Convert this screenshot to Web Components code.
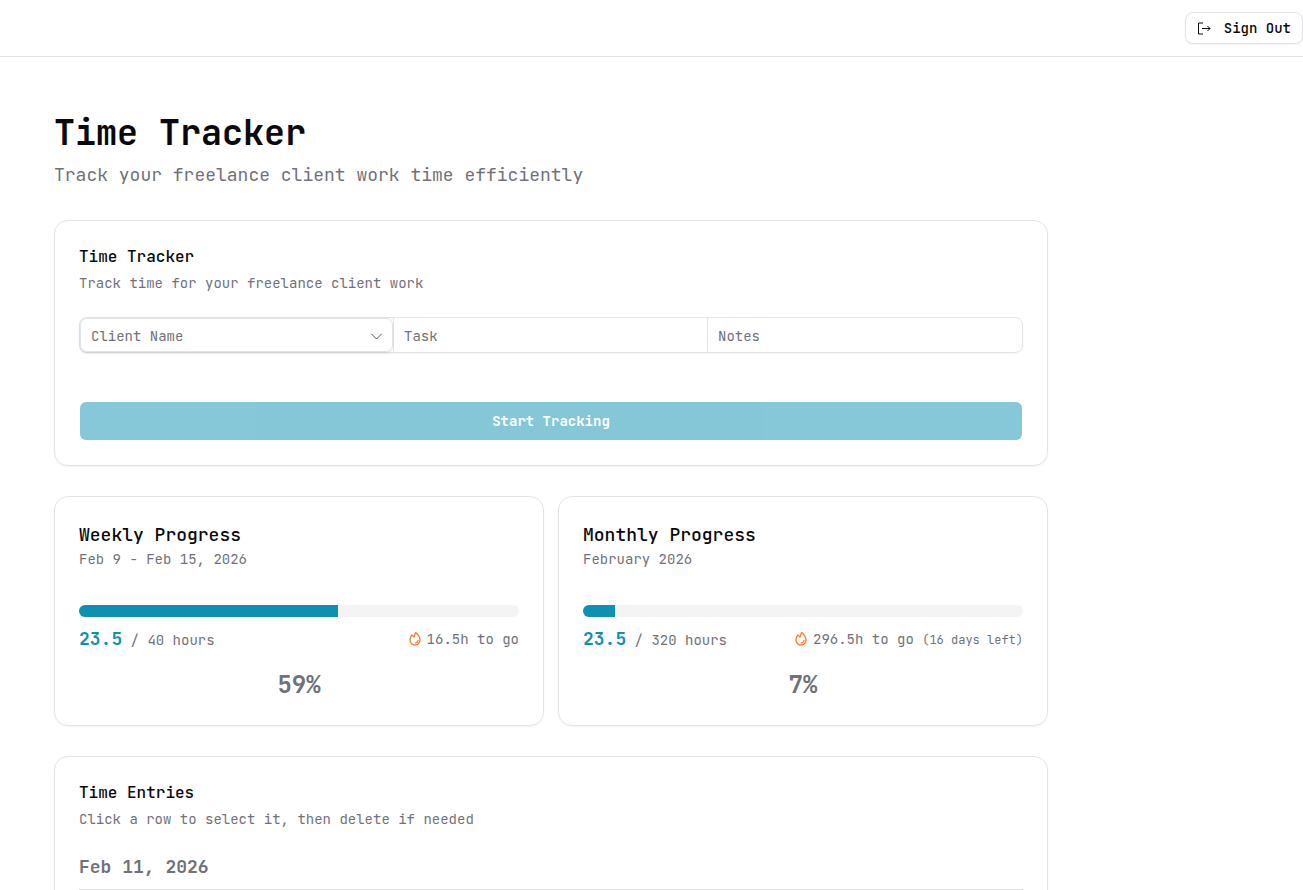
<!DOCTYPE html>
<html lang="en">
<head>
<meta charset="utf-8">
<meta name="viewport" content="width=device-width, initial-scale=1">
<title>Time Tracker</title>
<style>
  :root {
    --foreground: #09090b;
    --muted: #71717a;
    --border: #e4e4e7;
    --track: #f4f4f5;
    --primary: #0e91b1;
    --flame: #f97316;
  }

  body {
    margin: 0;
    background: #fff;
    color: var(--foreground);
    font-family: "JetBrains Mono", "DejaVu Sans Mono", monospace;
    font-size: 14px;
    line-height: 20px;
  }
</style>
</head>
<body>
<tracker-app>
  <page-heading heading="Time Tracker" subtitle="Track your freelance client work time efficiently"></page-heading>
  <ui-card heading="Time Tracker" description="Track time for your freelance client work">
    <tracker-form></tracker-form>
  </ui-card>
  <card-row>
    <progress-card heading="Weekly Progress" period="Feb 9 - Feb 15, 2026" hours="23.5" goal="40" remaining="16.5h to go" percent="59"></progress-card>
    <progress-card heading="Monthly Progress" period="February 2026" hours="23.5" goal="320" remaining="296.5h to go" note="(16 days left)" percent="7"></progress-card>
  </card-row>
  <ui-card heading="Time Entries" description="Click a row to select it, then delete if needed">
    <entry-day date="Feb 11, 2026"></entry-day>
  </ui-card>
</tracker-app>

<script>
class TrackerApp extends HTMLElement {
  constructor() {
    super();
    this.attachShadow({ mode: 'open' });
  }

  connectedCallback() {
    this.shadowRoot.innerHTML = `
      <style>
        :host {
          display: flex;
          flex-direction: column;
          height: 100vh;
        }

        header {
          display: flex;
          flex: none;
          align-items: center;
          justify-content: flex-end;
          height: 56px;
          border-bottom: 1px solid var(--border);
        }

        button {
          display: flex;
          align-items: center;
          gap: 12px;
          height: 32px;
          padding: 0 11px;
          border: 1px solid var(--border);
          border-radius: 8px;
          background: #fff;
          box-shadow: 0 1px 2px rgb(0 0 0 / 0.05);
          color: inherit;
          font: inherit;
          font-weight: 500;
          cursor: pointer;
        }

        main {
          flex: 1;
          overflow-y: auto;
          scrollbar-width: none;
          padding: 56px 54px;
        }

        .column {
          display: flex;
          flex-direction: column;
          gap: 30px;
          max-width: 994px;
        }
      </style>
      <header>
        <button type="button">
          <svg width="15" height="15" viewBox="0 0 15 15" fill="none" stroke="currentColor" aria-hidden="true">
            <path d="M6 2H1.5V13H6"/>
            <path d="M5 7.5H13M10.5 5L13 7.5L10.5 10"/>
          </svg>
          <span>Sign Out</span>
        </button>
      </header>
      <main>
        <div class="column"><slot></slot></div>
      </main>
    `;
  }
}

class PageHeading extends HTMLElement {
  constructor() {
    super();
    this.attachShadow({ mode: 'open' });
  }

  connectedCallback() {
    this.shadowRoot.innerHTML = `
      <style>
        :host {
          display: flex;
          flex-direction: column;
          gap: 8px;
          padding-bottom: 1px;
        }

        h1 {
          margin: 0;
          font-size: 35px;
          font-weight: 700;
          line-height: 40px;
        }

        p {
          margin: 0;
          color: var(--muted);
          font-size: 18px;
          line-height: 28px;
        }
      </style>
      <h1>${this.getAttribute('heading')}</h1>
      <p>${this.getAttribute('subtitle')}</p>
    `;
  }
}

class UiCard extends HTMLElement {
  constructor() {
    super();
    this.attachShadow({ mode: 'open' });
  }

  connectedCallback() {
    this.shadowRoot.innerHTML = `
      <style>
        :host {
          display: block;
          padding: 24px;
          border: 1px solid var(--border);
          border-radius: 14px;
          box-shadow: 0 1px 2px rgb(0 0 0 / 0.05);
        }

        h2 {
          margin: 0 0 4px;
          font-size: 16px;
          font-weight: 500;
          line-height: 24px;
        }

        p {
          margin: 0 0 24px;
          color: var(--muted);
        }
      </style>
      <h2>${this.getAttribute('heading')}</h2>
      <p>${this.getAttribute('description')}</p>
      <slot></slot>
    `;
  }
}

class TrackerForm extends HTMLElement {
  constructor() {
    super();
    this.attachShadow({ mode: 'open' });
  }

  connectedCallback() {
    this.shadowRoot.innerHTML = `
      <style>
        :host {
          display: block;
        }

        form {
          display: flex;
          flex-direction: column;
          gap: 48px;
        }

        .fields {
          display: grid;
          grid-template-columns: repeat(3, 1fr);
          height: 34px;
          border: 1px solid var(--border);
          border-radius: 8px;
          box-shadow: 0 1px 2px rgb(0 0 0 / 0.05);
        }

        .field {
          position: relative;
          display: flex;
          min-width: 0;
          border-right: 1px solid var(--border);
        }

        .field:last-child {
          border-right: 0;
        }

        select, input {
          flex: 1;
          min-width: 0;
          margin: 0;
          padding: 2px 10px 0;
          border: 0;
          background: transparent;
          color: var(--foreground);
          font: inherit;
          outline: 0;
        }

        select {
          appearance: none;
          border: 1px solid var(--border);
          border-radius: 7px;
          box-shadow: 0 1px 2px rgb(0 0 0 / 0.1);
          color: var(--muted);
        }

        input::placeholder {
          color: var(--muted);
          opacity: 1;
        }

        .chevron {
          position: absolute;
          top: 11px;
          right: 9px;
          color: #52525b;
          pointer-events: none;
        }

        button {
          height: 38px;
          margin: 1px;
          border: 0;
          border-radius: 6px;
          background: var(--primary);
          color: #fff;
          font: inherit;
          font-weight: 700;
          opacity: 0.5;
        }
      </style>
      <form>
        <div class="fields">
          <div class="field">
            <select aria-label="Client Name">
              <option>Client Name</option>
            </select>
            <svg class="chevron" width="15" height="15" viewBox="0 0 15 15" fill="none" stroke="currentColor" stroke-linecap="round" stroke-linejoin="round" aria-hidden="true">
              <path d="M2.5 5L7.5 10L12.5 5"/>
            </svg>
          </div>
          <div class="field"><input type="text" placeholder="Task" aria-label="Task"></div>
          <div class="field"><input type="text" placeholder="Notes" aria-label="Notes"></div>
        </div>
        <button type="submit" disabled>Start Tracking</button>
      </form>
    `;
  }
}

class CardRow extends HTMLElement {
  constructor() {
    super();
    this.attachShadow({ mode: 'open' });
  }

  connectedCallback() {
    this.shadowRoot.innerHTML = `
      <style>
        :host {
          display: grid;
          grid-template-columns: repeat(auto-fit, minmax(420px, 1fr));
          gap: 14px;
        }
      </style>
      <slot></slot>
    `;
  }
}

class ProgressCard extends HTMLElement {
  constructor() {
    super();
    this.attachShadow({ mode: 'open' });
  }

  connectedCallback() {
    const hours = this.getAttribute('hours');
    const goal = this.getAttribute('goal');
    const note = this.getAttribute('note') || '';

    this.shadowRoot.innerHTML = `
      <style>
        :host {
          display: block;
          padding: 24px;
          border: 1px solid var(--border);
          border-radius: 14px;
          box-shadow: 0 1px 2px rgb(0 0 0 / 0.05);
          color: var(--muted);
        }

        h2 {
          margin: 0;
          color: var(--foreground);
          font-size: 18px;
          font-weight: 500;
          line-height: 28px;
        }

        p {
          margin: 0 0 36px;
        }

        .bar {
          height: 12px;
          margin-bottom: 8px;
          overflow: hidden;
          border-radius: 6px;
          background: var(--track);
        }

        .fill {
          height: 100%;
          background: var(--primary);
        }

        .stats {
          display: flex;
          align-items: center;
          justify-content: space-between;
          height: 28px;
          margin-bottom: 16px;
          line-height: 28px;
          white-space: nowrap;
        }

        strong {
          color: var(--primary);
          font-size: 18px;
        }

        .left {
          display: flex;
          align-items: center;
          gap: 4px;
        }

        .left svg {
          flex: none;
          color: var(--flame);
        }

        small {
          font-size: 12px;
        }

        .percent {
          font-size: 24px;
          font-weight: 700;
          line-height: 32px;
          text-align: center;
        }
      </style>
      <h2>${this.getAttribute('heading')}</h2>
      <p>${this.getAttribute('period')}</p>
      <div class="bar" role="progressbar" aria-label="${this.getAttribute('heading')}" aria-valuemin="0" aria-valuemax="${goal}" aria-valuenow="${hours}">
        <div class="fill" style="width: ${hours / goal * 100}%"></div>
      </div>
      <div class="stats">
        <span><strong>${hours}</strong> / ${goal} hours</span>
        <span class="left">
          <svg width="16" height="16" viewBox="0 0 256 256" fill="currentColor" stroke="currentColor" stroke-width="4" aria-hidden="true">
            <path d="M143.38,17.85a8,8,0,0,0-12.63,3.41l-22,60.41L84.59,58.26a8,8,0,0,0-11.93.89C51,87.53,40,116.08,40,144a88,88,0,0,0,176,0C216,84.55,165.21,36,143.38,17.85ZM128,216a72.08,72.08,0,0,1-72-72c0-22,8.09-44.79,24.06-67.84l26.37,25.58a8,8,0,0,0,13.09-3l22.27-61.07C164.21,58.08,200,97.91,200,144A72.08,72.08,0,0,1,128,216Zm55.89-62.66a57.6,57.6,0,0,1-46.56,46.55A8.75,8.75,0,0,1,136,200a8,8,0,0,1-1.32-15.89c16.57-2.79,30.63-16.85,33.44-33.45a8,8,0,0,1,15.78,2.68Z"/>
          </svg>
          <span>${this.getAttribute('remaining')}${note && ` <small>${note}</small>`}</span>
        </span>
      </div>
      <div class="percent">${this.getAttribute('percent')}%</div>
    `;
  }
}

class EntryDay extends HTMLElement {
  constructor() {
    super();
    this.attachShadow({ mode: 'open' });
  }

  connectedCallback() {
    this.shadowRoot.innerHTML = `
      <style>
        :host {
          display: block;
        }

        h3 {
          margin: 0;
          padding-bottom: 8px;
          border-bottom: 1px solid var(--border);
          color: var(--muted);
          font-size: 18px;
          font-weight: 600;
          line-height: 28px;
        }
      </style>
      <h3>${this.getAttribute('date')}</h3>
      <slot></slot>
    `;
  }
}

customElements.define('tracker-app', TrackerApp);
customElements.define('page-heading', PageHeading);
customElements.define('ui-card', UiCard);
customElements.define('tracker-form', TrackerForm);
customElements.define('card-row', CardRow);
customElements.define('progress-card', ProgressCard);
customElements.define('entry-day', EntryDay);
</script>
</body>
</html>
